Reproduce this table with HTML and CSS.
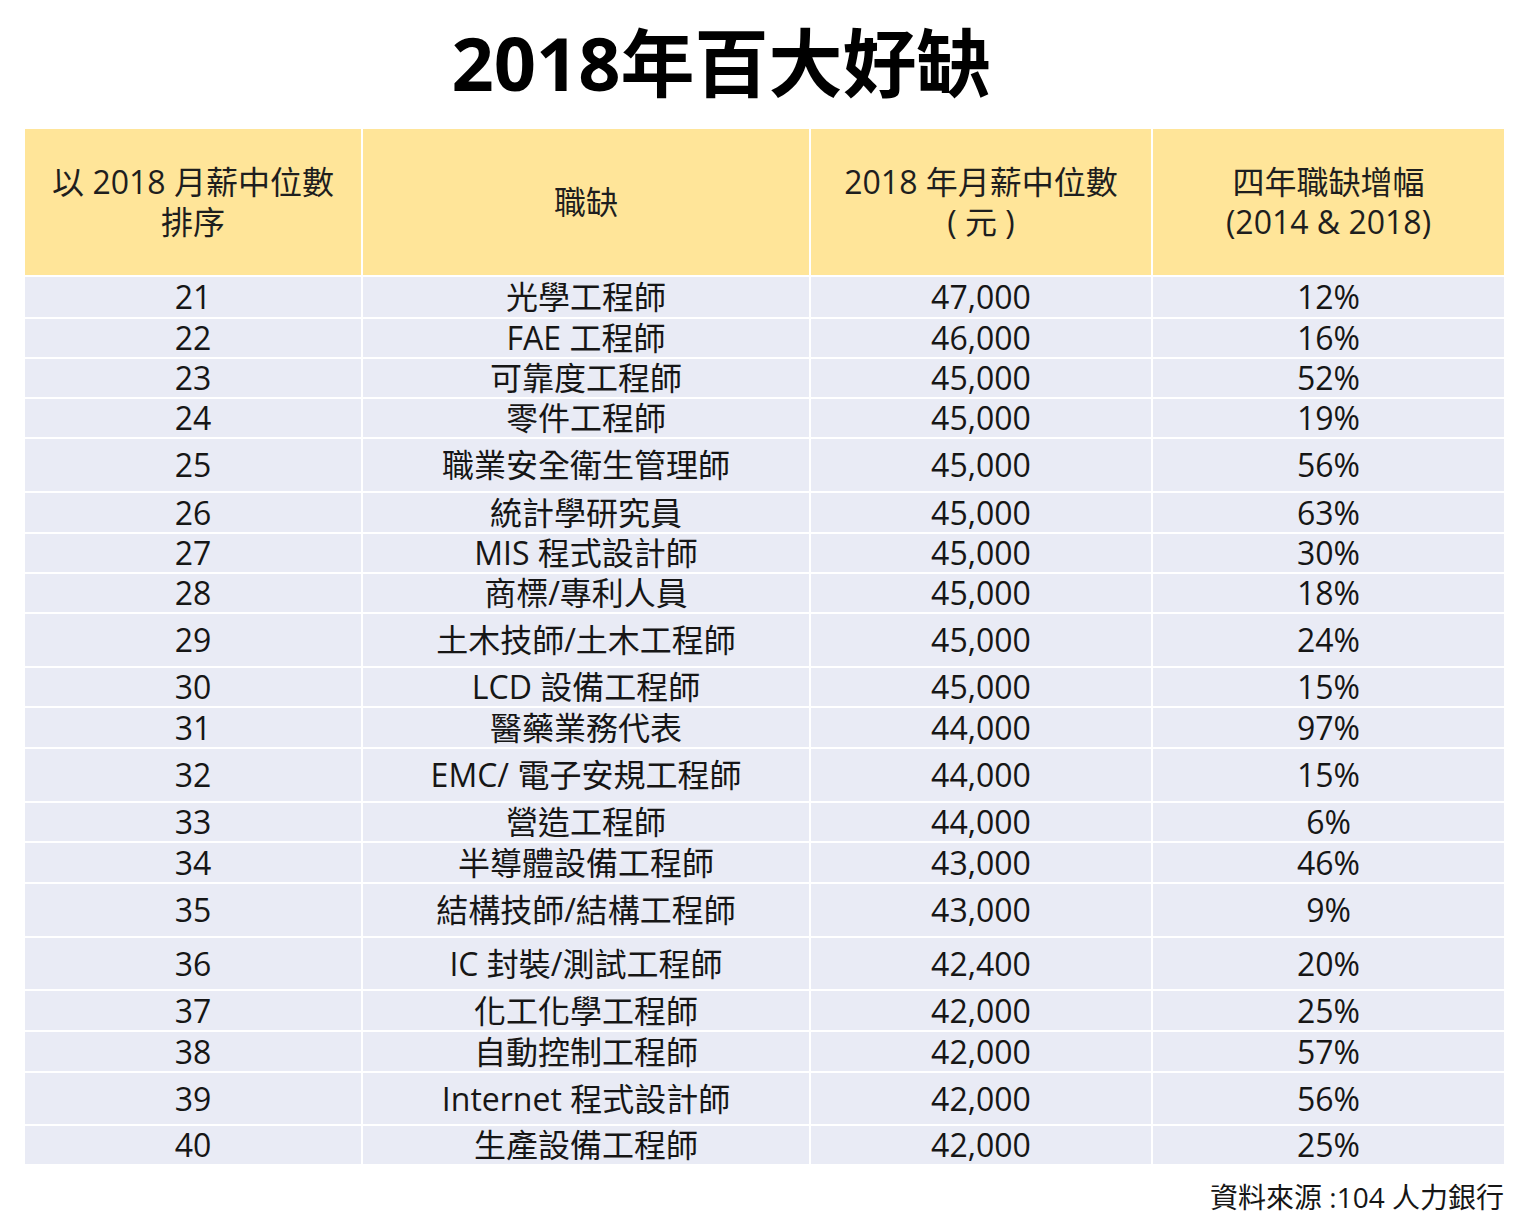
FILE: index.html
```html
<!DOCTYPE html>
<html lang="zh-Hant">
<head>
<meta charset="utf-8">
<title>2018年百大好缺</title>
<link rel="stylesheet" href="styles.css">
</head>
<body>
<div class="page">
  <h1 class="title">2018年百大好缺</h1>
  <div class="table">
    <div class="row head">
      <div class="cell"><span>以 2018 月薪中位數<br>排序</span></div>
      <div class="cell"><span>職缺</span></div>
      <div class="cell"><span>2018 年月薪中位數<br>( 元 )</span></div>
      <div class="cell"><span>四年職缺增幅<br>(2014 &amp; 2018)</span></div>
    </div>
    <div class="row h42"><div class="cell">21</div><div class="cell">光學工程師</div><div class="cell">47,000</div><div class="cell">12%</div></div>
    <div class="row h40"><div class="cell">22</div><div class="cell">FAE 工程師</div><div class="cell">46,000</div><div class="cell">16%</div></div>
    <div class="row h40"><div class="cell">23</div><div class="cell">可靠度工程師</div><div class="cell">45,000</div><div class="cell">52%</div></div>
    <div class="row h40"><div class="cell">24</div><div class="cell">零件工程師</div><div class="cell">45,000</div><div class="cell">19%</div></div>
    <div class="row h54"><div class="cell">25</div><div class="cell">職業安全衛生管理師</div><div class="cell">45,000</div><div class="cell">56%</div></div>
    <div class="row h41"><div class="cell">26</div><div class="cell">統計學研究員</div><div class="cell">45,000</div><div class="cell">63%</div></div>
    <div class="row h40"><div class="cell">27</div><div class="cell">MIS 程式設計師</div><div class="cell">45,000</div><div class="cell">30%</div></div>
    <div class="row h40"><div class="cell">28</div><div class="cell">商標/專利人員</div><div class="cell">45,000</div><div class="cell">18%</div></div>
    <div class="row h54"><div class="cell">29</div><div class="cell">土木技師/土木工程師</div><div class="cell">45,000</div><div class="cell">24%</div></div>
    <div class="row h40"><div class="cell">30</div><div class="cell">LCD 設備工程師</div><div class="cell">45,000</div><div class="cell">15%</div></div>
    <div class="row h41"><div class="cell">31</div><div class="cell">醫藥業務代表</div><div class="cell">44,000</div><div class="cell">97%</div></div>
    <div class="row h54"><div class="cell">32</div><div class="cell">EMC/ 電子安規工程師</div><div class="cell">44,000</div><div class="cell">15%</div></div>
    <div class="row h40"><div class="cell">33</div><div class="cell">營造工程師</div><div class="cell">44,000</div><div class="cell">6%</div></div>
    <div class="row h41"><div class="cell">34</div><div class="cell">半導體設備工程師</div><div class="cell">43,000</div><div class="cell">46%</div></div>
    <div class="row h54"><div class="cell">35</div><div class="cell">結構技師/結構工程師</div><div class="cell">43,000</div><div class="cell">9%</div></div>
    <div class="row h53"><div class="cell">36</div><div class="cell">IC 封裝/測試工程師</div><div class="cell">42,400</div><div class="cell">20%</div></div>
    <div class="row h41"><div class="cell">37</div><div class="cell">化工化學工程師</div><div class="cell">42,000</div><div class="cell">25%</div></div>
    <div class="row h41"><div class="cell">38</div><div class="cell">自動控制工程師</div><div class="cell">42,000</div><div class="cell">57%</div></div>
    <div class="row h53"><div class="cell">39</div><div class="cell">Internet 程式設計師</div><div class="cell">42,000</div><div class="cell">56%</div></div>
    <div class="row h40"><div class="cell">40</div><div class="cell">生產設備工程師</div><div class="cell">42,000</div><div class="cell">25%</div></div>
  </div>
  <div class="source">資料來源 :104 人力銀行</div>
</div>
</body>
</html>
```
FILE: styles.css
```css
html, body {
  margin: 0;
  padding: 0;
  background: #ffffff;
}
body {
  font-family: "Open Sans", "Noto Sans CJK TC", sans-serif;
  color: #161616;
}
.page {
  width: 1536px;
  height: 1228px;
  overflow: hidden;
}
.title {
  margin: 0;
  height: 129px;
  box-sizing: border-box;
  padding: 19px 94px 0 0;
  text-align: center;
  font-size: 74px;
  line-height: 88px;
  font-weight: 700;
  color: #000;
  letter-spacing: 0;
}
.table {
  margin-left: 25px;
  width: 1479px;
  display: flex;
  flex-direction: column;
  gap: 2px;
  background: #ffffff;
}
.row {
  display: grid;
  grid-template-columns: 336px 446px 340px 351px;
  column-gap: 2px;
}
.cell {
  background: #e9ebf5;
  display: flex;
  align-items: center;
  justify-content: center;
  text-align: center;
  font-size: 32px;
  line-height: 1;
  white-space: nowrap;
}
.head .cell {
  background: #ffe599;
  line-height: 40px;
  color: #1e1e1e;
}
.head { height: 146px; }
.h40 { height: 38px; }
.h41 { height: 39px; }
.h42 { height: 40px; }
.h53 { height: 51px; }
.h54 { height: 52px; }
.source {
  width: 1504px;
  margin-top: 16px;
  text-align: right;
  font-size: 28px;
  line-height: 34px;
  color: #161616;
}
```
